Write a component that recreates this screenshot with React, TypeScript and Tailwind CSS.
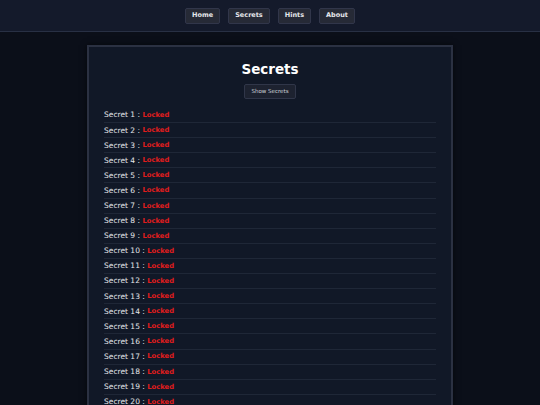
import { useState } from 'react';

const secrets = Array.from({ length: 24 }, (_, i) => i + 1);

export default function App() {
  const [shown, setShown] = useState(false);

  return (
    <div
      className="min-h-screen bg-[#0b0f19] text-[#e5e7eb]"
      style={{ fontFamily: '"DejaVu Sans", Verdana, sans-serif' }}
    >
      {/* Header */}
      <header className="h-[32px] bg-[#141a2b] border-b border-[#283044] flex items-center justify-center gap-[8px]">
        {['Home', 'Secrets', 'Hints', 'About'].map((item) => (
          <button
            key={item}
            className="h-[16px] px-[6px] rounded-[2px] bg-[#262a36] border border-[#31364a] text-[6.5px] font-bold text-[#e5e7eb]"
          >
            {item}
          </button>
        ))}
      </header>

      {/* Content */}
      <main className="flex justify-center pt-[13px]">
        <div className="w-[366px] bg-[#111827] border-2 border-[#2b3142] pt-[12px] px-[15px] pb-[12px] shadow-[0_0_6px_rgba(0,0,0,0.6)]">
          <h1 className="text-center text-[13.5px] font-bold text-white leading-[20px]">Secrets</h1>
          <div className="flex justify-center mt-[5px] mb-[9px]">
            <button
              onClick={() => setShown(!shown)}
              className="h-[15px] w-[52px] rounded-[2px] bg-[#1d2230] border border-[#303649] text-[5.5px] text-[#d1d5db]"
            >
              Show Secrets
            </button>
          </div>
          <ul>
            {secrets.map((n) => (
              <li
                key={n}
                className="h-[15.1px] flex items-center border-b border-[#1f2737] text-[7.5px] text-[#e5e7eb]"
              >
                <span>Secret {n} :&nbsp;</span>
                <span className="font-bold text-[6.8px] text-[#e11d1d]">{shown ? '******' : 'Locked'}</span>
              </li>
            ))}
          </ul>
        </div>
      </main>
    </div>
  );
}
